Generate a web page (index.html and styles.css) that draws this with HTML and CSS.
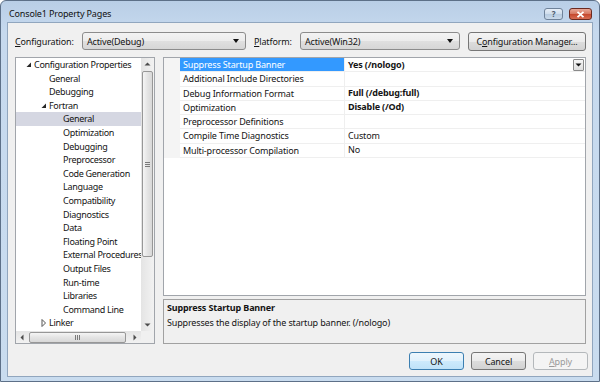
FILE: index.html
```html
<!DOCTYPE html>
<html lang="en">
<head>
    <meta charset="UTF-8">
    <title>Console1 Property Pages</title>
    <link rel="stylesheet" href="styles.css">
</head>
<body>

<div class="window">
    <!-- Title bar -->
    <div class="titlebar">
        <span class="title">Console1 Property Pages</span>
        <div class="caption">
            <span class="cap-btn cap-help">?</span>
            <span class="cap-btn cap-close">
                <svg width="9" height="7" viewBox="0 0 9 7"><path d="M1.5 0.8 L7.5 6.2 M7.5 0.8 L1.5 6.2" stroke="#fff" stroke-width="1.8"/></svg>
            </span>
        </div>
    </div>

    <div class="client">
        <!-- Configuration / platform row -->
        <div class="config-row">
            <span class="lbl lbl-config"><u>C</u>onfiguration:</span>
            <div class="combo combo-config"><span>Active(Debug)</span><span class="combo-arrow"></span></div>
            <span class="lbl lbl-platform"><u>P</u>latform:</span>
            <div class="combo combo-platform"><span>Active(Win32)</span><span class="combo-arrow"></span></div>
            <button class="btn btn-manager">C<u>o</u>nfiguration Manager...</button>
        </div>

        <div class="main">
            <!-- Tree -->
            <div class="tree-box">
                <div class="tree-list">
                    <div class="node lvl0"><span class="tw"><svg width="10" height="10" viewBox="0 0 10 10"><polygon points="7,2.5 7,7 2.5,7" fill="#262626"/></svg></span>Configuration Properties</div>
                    <div class="node lvl1"><span class="tw"></span>General</div>
                    <div class="node lvl1"><span class="tw"></span>Debugging</div>
                    <div class="node lvl1"><span class="tw"><svg width="10" height="10" viewBox="0 0 10 10"><polygon points="7,2.5 7,7 2.5,7" fill="#262626"/></svg></span>Fortran</div>
                    <div class="node lvl2 selected"><span class="tw"></span>General</div>
                    <div class="node lvl2"><span class="tw"></span>Optimization</div>
                    <div class="node lvl2"><span class="tw"></span>Debugging</div>
                    <div class="node lvl2"><span class="tw"></span>Preprocessor</div>
                    <div class="node lvl2"><span class="tw"></span>Code Generation</div>
                    <div class="node lvl2"><span class="tw"></span>Language</div>
                    <div class="node lvl2"><span class="tw"></span>Compatibility</div>
                    <div class="node lvl2"><span class="tw"></span>Diagnostics</div>
                    <div class="node lvl2"><span class="tw"></span>Data</div>
                    <div class="node lvl2"><span class="tw"></span>Floating Point</div>
                    <div class="node lvl2"><span class="tw"></span>External Procedures</div>
                    <div class="node lvl2"><span class="tw"></span>Output Files</div>
                    <div class="node lvl2"><span class="tw"></span>Run-time</div>
                    <div class="node lvl2"><span class="tw"></span>Libraries</div>
                    <div class="node lvl2"><span class="tw"></span>Command Line</div>
                    <div class="node lvl1"><span class="tw"><svg width="10" height="10" viewBox="0 0 10 10"><polygon points="3,1.5 6.5,5 3,8.5" fill="none" stroke="#555" stroke-width="1"/></svg></span>Linker</div>
                </div>
                <!-- vertical scrollbar -->
                <div class="vscroll">
                    <span class="sb-arrow"><svg width="7" height="4" viewBox="0 0 7 4"><polygon points="0.5,3.5 3.5,0.5 6.5,3.5" fill="#4d4d4d"/></svg></span>
                    <div class="vtrack">
                        <div class="vthumb"><svg width="5" height="5" viewBox="0 0 5 5"><path d="M0 0.5H5M0 2.5H5M0 4.5H5" stroke="#7a7a7a" stroke-width="1"/></svg></div>
                    </div>
                    <span class="sb-arrow"><svg width="7" height="4" viewBox="0 0 7 4"><polygon points="0.5,0.5 3.5,3.5 6.5,0.5" fill="#4d4d4d"/></svg></span>
                </div>
                <!-- horizontal scrollbar -->
                <div class="hscroll">
                    <span class="sb-arrow"><svg width="4" height="7" viewBox="0 0 4 7"><polygon points="3.5,0.5 0.5,3.5 3.5,6.5" fill="#4d4d4d"/></svg></span>
                    <div class="htrack">
                        <div class="hthumb"><svg width="5" height="5" viewBox="0 0 5 5"><path d="M0.5 0V5M2.5 0V5M4.5 0V5" stroke="#7a7a7a" stroke-width="1"/></svg></div>
                    </div>
                    <span class="sb-arrow"><svg width="4" height="7" viewBox="0 0 4 7"><polygon points="0.5,0.5 3.5,3.5 0.5,6.5" fill="#4d4d4d"/></svg></span>
                </div>
                <div class="sb-corner"></div>
            </div>

            <div class="right">
                <!-- Property grid -->
                <div class="grid">
                    <div class="prow">
                        <span class="gutter"></span>
                        <span class="pname active">Suppress Startup Banner</span>
                        <span class="pvalue bold">Yes (/nologo)<span class="drop"><svg width="7" height="4" viewBox="0 0 7 4"><polygon points="0.5,0.5 3.5,3.5 6.5,0.5" fill="#111"/></svg></span></span>
                    </div>
                    <div class="prow">
                        <span class="gutter"></span>
                        <span class="pname">Additional Include Directories</span>
                        <span class="pvalue"></span>
                    </div>
                    <div class="prow">
                        <span class="gutter"></span>
                        <span class="pname">Debug Information Format</span>
                        <span class="pvalue bold">Full (/debug:full)</span>
                    </div>
                    <div class="prow">
                        <span class="gutter"></span>
                        <span class="pname">Optimization</span>
                        <span class="pvalue bold">Disable (/Od)</span>
                    </div>
                    <div class="prow">
                        <span class="gutter"></span>
                        <span class="pname">Preprocessor Definitions</span>
                        <span class="pvalue"></span>
                    </div>
                    <div class="prow">
                        <span class="gutter"></span>
                        <span class="pname">Compile Time Diagnostics</span>
                        <span class="pvalue">Custom</span>
                    </div>
                    <div class="prow">
                        <span class="gutter"></span>
                        <span class="pname">Multi-processor Compilation</span>
                        <span class="pvalue">No</span>
                    </div>
                </div>

                <!-- Description -->
                <div class="desc">
                    <div class="desc-title">Suppress Startup Banner</div>
                    <div class="desc-text">Suppresses the display of the startup banner. (/nologo)</div>
                </div>
            </div>
        </div>

        <!-- Dialog buttons -->
        <div class="buttons">
            <button class="btn btn-default">OK</button>
            <button class="btn">Cancel</button>
            <button class="btn btn-disabled"><u>A</u>pply</button>
        </div>
    </div>
</div>

</body>
</html>
```

FILE: styles.css
```css
/* Basic styling */
* {
    box-sizing: border-box;
}

body {
    margin: 0;
    font-family: "Noto Sans", "Open Sans", sans-serif;
    font-size: 9px;
    letter-spacing: -0.15px;
    color: #141414;
    background: #ffffff;
}

u {
    text-decoration: underline;
    text-underline-offset: 1px;
}

/* Window frame */
.window {
    width: 600px;
    height: 382px;
    border: 1px solid #5d7088;
    border-radius: 6px 6px 0 0;
    background: linear-gradient(#b9cee6, #c6d9ee 30px, #c9dcef);
    padding: 0 6px 4px 6px;
    display: flex;
    flex-direction: column;
}

.titlebar {
    height: 21px;
    display: flex;
    align-items: flex-start;
    padding-left: 2px;
}

.title {
    margin-top: 7px;
    line-height: 12px;
    color: #111111;
}

.caption {
    margin-left: auto;
    margin-top: 7px;
    margin-right: 1px;
    display: flex;
    gap: 6px;
}

.cap-btn {
    height: 12px;
    border-radius: 3px;
    display: flex;
    align-items: center;
    justify-content: center;
}

.cap-help {
    width: 19px;
    border: 1px solid #6f8299;
    background: linear-gradient(#e6eef7, #cfdceb 50%, #b7cbe0 50%, #c9d9ea);
    color: #4a5a6c;
    font-size: 8px;
    font-weight: bold;
    line-height: 10px;
}

.cap-close {
    width: 23px;
    border: 1px solid #6b2a20;
    background: linear-gradient(#e9a898, #d5765f 50%, #c5452b 50%, #d66c52);
}

/* Client area */
.client {
    flex: 1;
    background-color: #f0f0f0;
    border: 1px solid #91a6be;
    padding: 9px 6px 0 7px;
    display: flex;
    flex-direction: column;
}

.config-row {
    height: 18px;
    display: flex;
    align-items: center;
}

.lbl-config {
    width: 67px;
}

.lbl-platform {
    width: 46px;
    margin-left: 8px;
}

.combo {
    height: 18px;
    border: 1px solid #8c8c8c;
    border-radius: 3px;
    background: linear-gradient(#f3f3f3, #ececec 50%, #e0e0e0 50%, #d6d6d6);
    padding: 0 6px 0 4px;
    display: flex;
    align-items: center;
    justify-content: space-between;
}

.combo-config {
    width: 164px;
}

.combo-platform {
    width: 160px;
}

.combo-arrow {
    width: 0;
    height: 0;
    border-left: 3.5px solid transparent;
    border-right: 3.5px solid transparent;
    border-top: 4px solid #111;
}

.btn {
    font-family: inherit;
    font-size: 9px;
    letter-spacing: -0.15px;
    color: #141414;
    height: 18px;
    padding: 0;
    border: 1px solid #767676;
    border-radius: 3px;
    background: linear-gradient(#f4f4f4, #ebebeb 50%, #dddddd 50%, #d2d2d2);
}

.btn-manager {
    width: 118px;
    height: 19px;
    margin-left: 8px;
}

/* Tree + property area */
.main {
    margin-top: 7px;
    height: 287px;
    display: flex;
    gap: 8px;
}

.tree-box {
    width: 140px;
    border: 1px solid #a1a5ab;
    background: #ffffff;
    display: grid;
    grid-template-columns: 1fr 13px;
    grid-template-rows: 1fr 12px;
}

.tree-list {
    overflow: hidden;
    white-space: nowrap;
    letter-spacing: -0.3px;
}

.node {
    height: 13.6px;
    line-height: 13.6px;
    display: flex;
    align-items: center;
}

.node.selected {
    background-color: #d5d7e2;
}

.tw {
    width: 10px;
    height: 10px;
    flex: none;
    display: flex;
}

.lvl0 { padding-left: 8px; }
.lvl1 { padding-left: 23px; }
.lvl2 { padding-left: 37px; }

/* Scrollbars */
.vscroll {
    background: linear-gradient(90deg, #e4e4e4, #f2f2f2);
    display: flex;
    flex-direction: column;
    align-items: center;
}

.vscroll .sb-arrow {
    height: 12px;
    display: flex;
    align-items: center;
}

.vtrack {
    flex: 1;
    width: 100%;
    padding: 1px 0 60px 1px;
}

.vthumb {
    height: 186px;
    width: 11px;
    border: 1px solid #979797;
    border-radius: 2px;
    background: linear-gradient(90deg, #f5f5f5, #e4e4e4 50%, #d8d8d8);
    display: flex;
    align-items: center;
    justify-content: center;
}

.hscroll {
    background: linear-gradient(#e4e4e4, #f2f2f2);
    display: flex;
    align-items: center;
}

.hscroll .sb-arrow {
    width: 12px;
    display: flex;
    justify-content: center;
}

.htrack {
    flex: 1;
    height: 100%;
    padding: 1px 0 0 1px;
}

.hthumb {
    width: 97px;
    height: 11px;
    border: 1px solid #979797;
    border-radius: 2px;
    background: linear-gradient(#f5f5f5, #e4e4e4 50%, #d8d8d8);
    display: flex;
    align-items: center;
    justify-content: center;
}

.sb-corner {
    background-color: #f0f0f0;
}

/* Right column */
.right {
    flex: 1;
    display: flex;
    flex-direction: column;
}

.grid {
    flex: 1;
    border: 1px solid #a1a5ab;
    background: #ffffff;
}

.prow {
    height: 14.3px;
    display: grid;
    grid-template-columns: 16px 165px 1fr;
}

.gutter {
    background-color: #f4f4f4;
}

.pname,
.pvalue {
    line-height: 14.3px;
    padding-left: 3px;
    border-bottom: 1px solid #efefef;
    white-space: nowrap;
    overflow: hidden;
}

.pname {
    border-right: 1px solid #efefef;
}

.pname.active {
    background-color: #3399ff;
    color: #ffffff;
}

.pvalue {
    display: flex;
    align-items: center;
}

.bold {
    font-weight: bold;
}

.drop {
    margin-left: auto;
    margin-right: 1px;
    width: 11px;
    height: 12px;
    border: 1px solid #8a8a8a;
    border-radius: 1px;
    background: linear-gradient(#f6f6f6, #dedede);
    display: flex;
    align-items: center;
    justify-content: center;
}

.desc {
    height: 45px;
    margin-top: 3px;
    border: 1px solid #a1a1a1;
    background-color: #f0f0f0;
    padding: 1px 3px;
}

.desc-title {
    font-weight: bold;
    line-height: 13px;
}

.desc-text {
    margin-top: 2px;
    line-height: 13px;
}

/* Dialog buttons */
.buttons {
    margin-top: 8px;
    margin-right: -2px;
    display: flex;
    justify-content: flex-end;
    gap: 7px;
}

.buttons .btn {
    width: 55px;
    height: 18px;
}

.btn-default {
    border-color: #3c7fb1;
    background: linear-gradient(#eef7fd, #e0f1fc 50%, #cdeafc 50%, #bfe2f8);
}

.btn-disabled {
    border-color: #b4b8bb;
    background: #f4f4f4;
    color: #9a9a9a;
}
```
